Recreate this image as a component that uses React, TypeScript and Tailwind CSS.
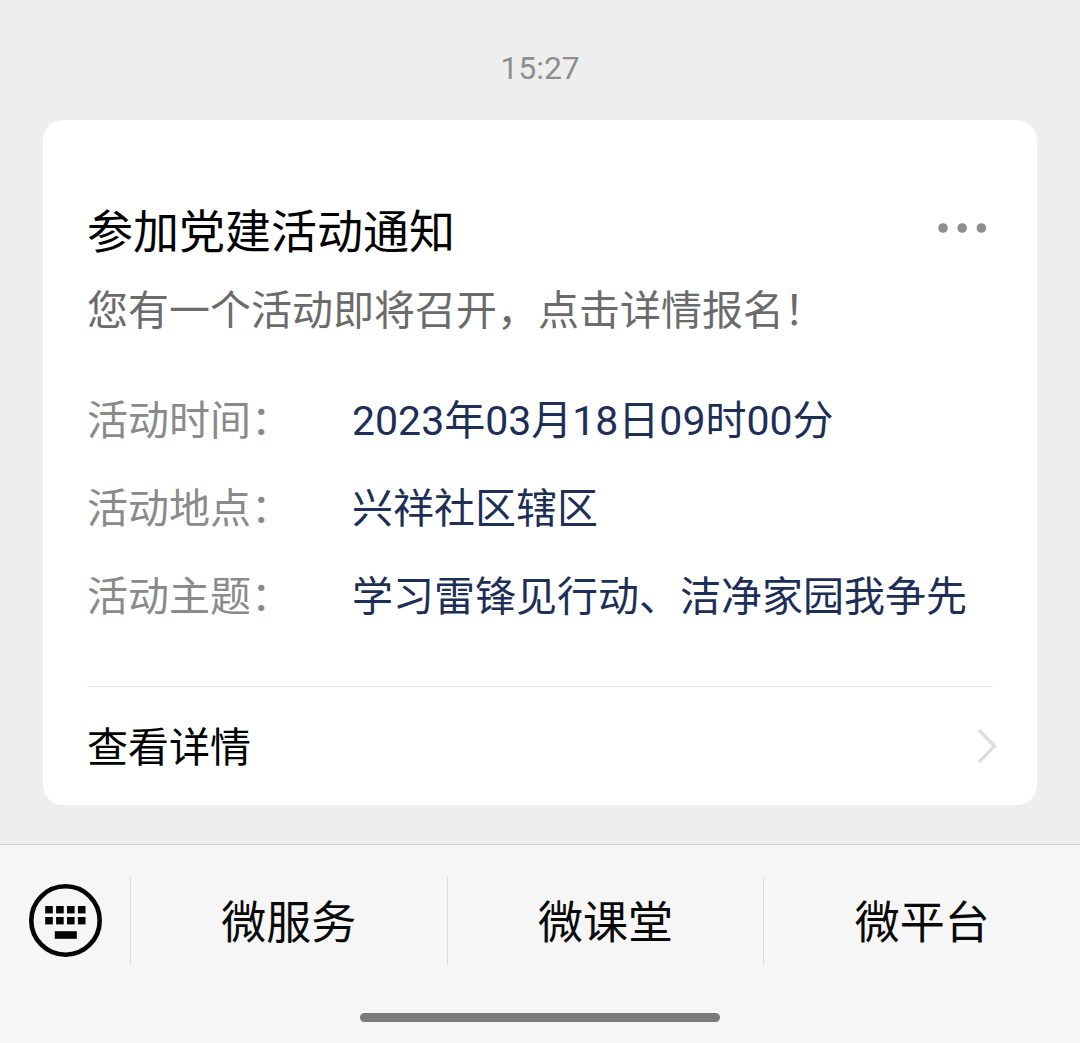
import React from 'react';

const details = [
    { label: '活动时间：', value: '2023年03月18日09时00分' },
    { label: '活动地点：', value: '兴祥社区辖区' },
    { label: '活动主题：', value: '学习雷锋见行动、洁净家园我争先' },
];

const menus = ['微服务', '微课堂', '微平台'];

const KeyboardIcon: React.FC = () => (
    <svg width="74" height="74" viewBox="0 0 74 74" aria-hidden="true">
        <circle cx="37.5" cy="36.5" r="34.2" fill="none" stroke="#050505" strokeWidth="4.6" />
        {[22, 33].map((y) =>
            [17.2, 28.1, 39, 49.9].map((x) => (
                <rect key={`${x}-${y}`} x={x} y={y} width="7.6" height="7.4" fill="#050505" />
            ))
        )}
        <rect x="26.8" y="47.2" width="22" height="7.6" fill="#050505" />
    </svg>
);

const NoticeCard: React.FC = () => (
    <article className="mx-[43px] rounded-[20px] bg-white px-11 pt-[78px]">
        <header className="flex items-start justify-between">
            <h1 className="text-[46px] leading-[68px] text-black">参加党建活动通知</h1>
            <button type="button" aria-label="更多" className="flex h-[60px] items-center px-1.5">
                <svg width="49" height="10" viewBox="0 0 49 10" fill="#8f8f8f">
                    <circle cx="5" cy="5" r="4.8" />
                    <circle cx="24.2" cy="5" r="4.8" />
                    <circle cx="43.4" cy="5" r="4.8" />
                </svg>
            </button>
        </header>
        <p className="mt-[15px] text-[41px] leading-[60px] text-[#6b6b6b]">您有一个活动即将召开，点击详情报名！</p>

        <dl className="mt-[50px] flex flex-col gap-7 text-[41px] leading-[60px]">
            {details.map((item) => (
                <div key={item.label} className="flex">
                    <dt className="w-[265px] shrink-0 text-[#8a8a8a]">{item.label}</dt>
                    <dd className="text-[#1d2f57]">{item.value}</dd>
                </div>
            ))}
        </dl>

        <a href="#detail" className="mt-[59px] flex h-[119px] items-center justify-between border-t border-[#e8e8e8]">
            <span className="pt-1 text-[41px] leading-[60px] text-black">查看详情</span>
            <svg className="-mr-1" width="20" height="36" viewBox="0 0 20 36" fill="none" stroke="#dedede" strokeWidth="3.4">
                <path d="M2 2L17.5 18L2 34" />
            </svg>
        </a>
    </article>
);

const App: React.FC = () => {
    return (
        <div className="flex min-h-screen flex-col bg-[#eeeeee] font-['Roboto','Noto_Sans_CJK_SC',sans-serif]">
            <main className="flex-1 pb-[38px]">
                <time className="block pt-12 pb-8 text-center text-[32px] leading-10 text-[#8f8f8f]">15:27</time>
                <NoticeCard />
            </main>

            <footer className="border-t border-[#d2d2d2] bg-[#f6f6f6] pt-8 pb-[21px]">
                <nav className="flex h-[88px]">
                    <button type="button" aria-label="键盘" className="flex w-[130px] shrink-0 items-center justify-center">
                        <KeyboardIcon />
                    </button>
                    {menus.map((menu) => (
                        <button
                            key={menu}
                            type="button"
                            className="flex-1 border-l border-[#dedede] pt-1.5 text-[45px] leading-[64px] text-[#0a0a0a]"
                        >
                            {menu}
                        </button>
                    ))}
                </nav>
                {/* Home indicator */}
                <div className="mx-auto mt-12 h-[9px] w-1/3 rounded-full bg-[#7b7b7b]" />
            </footer>
        </div>
    );
};

export default App;
